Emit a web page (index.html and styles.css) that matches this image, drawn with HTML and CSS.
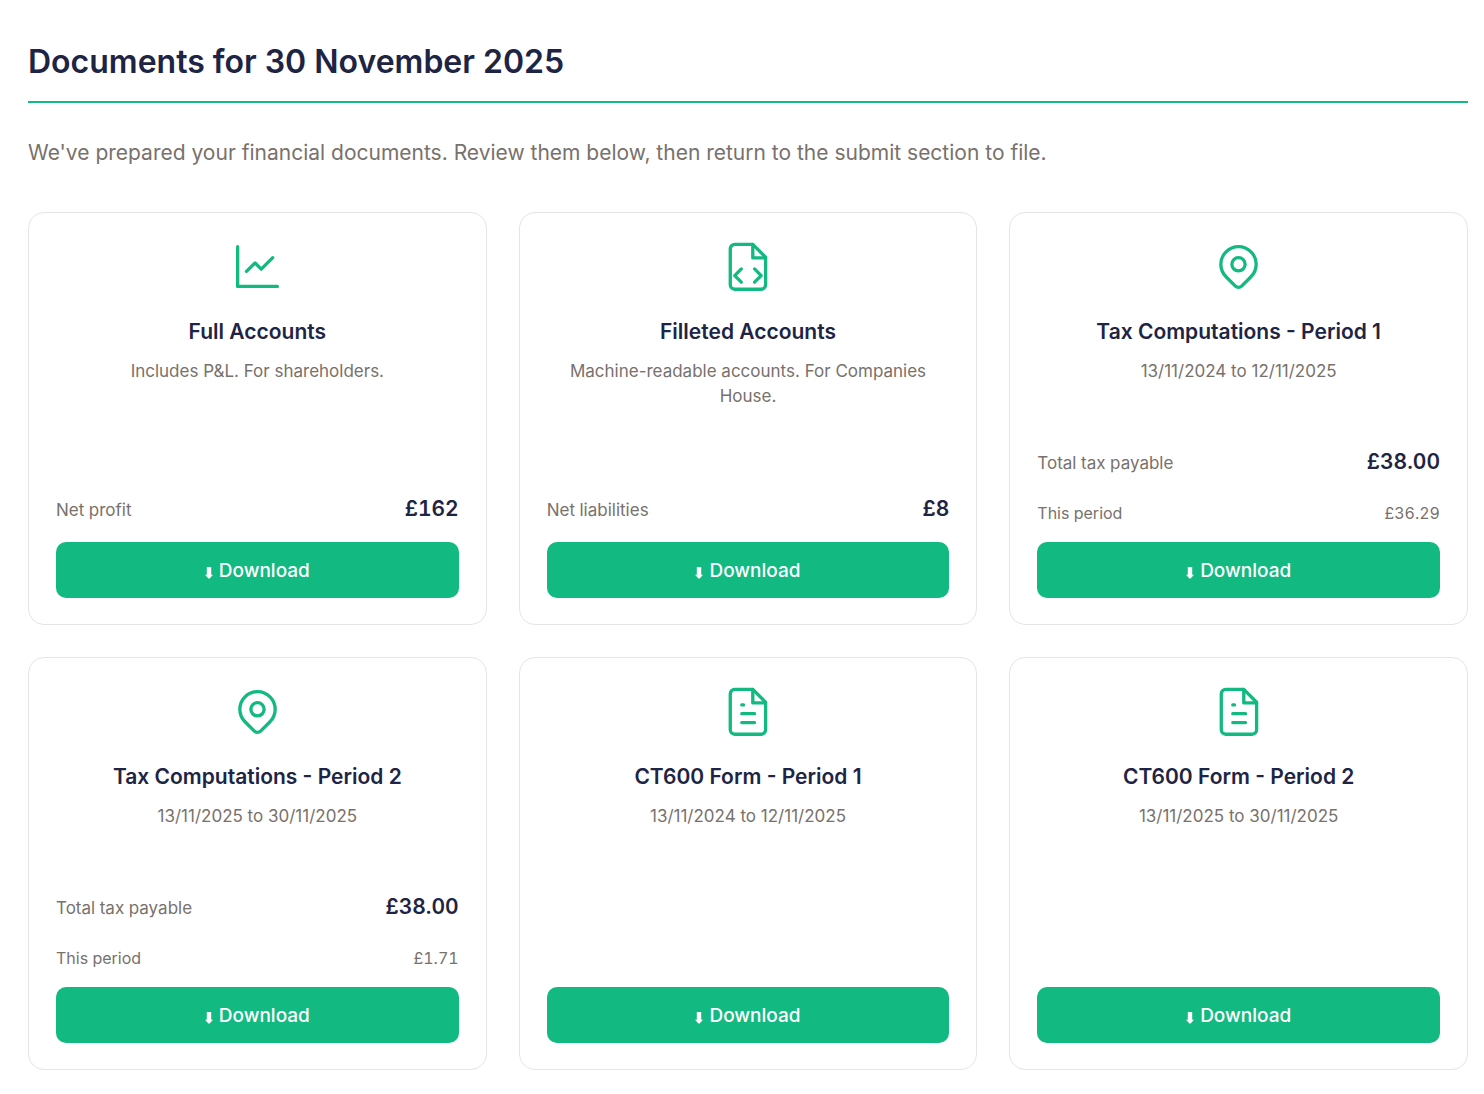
FILE: index.html
```
<!DOCTYPE html>
<html lang="en">
<head>
    <meta charset="UTF-8">
    <meta name="viewport" content="width=device-width, initial-scale=1.0">
    <title>Documents</title>
    <link rel="stylesheet" href="styles.css">
</head>
<body>
<!-- shared icons -->
<svg class="sprite" aria-hidden="true">
    <symbol id="icon-chart" viewBox="0 0 24 24">
        <path d="M3 3v18h18"/>
        <path d="M7 14.2l3.9-3.8 2.8 2.8 5.2-5.2"/>
    </symbol>
    <symbol id="icon-code" viewBox="0 0 24 24">
        <path d="M14.4 2H6.2a2 2 0 0 0-2 2v16.3a2 2 0 0 0 2 2h12a2 2 0 0 0 2-2V7.8z"/>
        <path d="M14.4 2v6.1h5.8"/>
        <path d="M9.2 13.1l-3 3 3 3M15.2 13.1l3 3-3 3"/>
    </symbol>
    <symbol id="icon-pin" viewBox="0 0 24 24">
        <path d="M17.657 16.657L13.414 20.9a1.998 1.998 0 0 1-2.827 0l-4.244-4.243a8 8 0 1 1 11.314 0z"/>
        <path d="M15 11a3 3 0 1 1-6 0 3 3 0 0 1 6 0z"/>
    </symbol>
    <symbol id="icon-file" viewBox="0 0 24 24">
        <path d="M14.4 2H6.2a2 2 0 0 0-2 2v16.3a2 2 0 0 0 2 2h12a2 2 0 0 0 2-2V7.8z"/>
        <path d="M14.4 2v6.1h5.8"/>
        <path d="M9.4 9h.8M9.4 13h5.8M9.4 17h5.8"/>
    </symbol>
    <symbol id="icon-down" viewBox="0 0 8 12">
        <path d="M1.8 0h4.4v7.8H8L4.6 11.5H3.4L0 7.8h1.8z"/>
    </symbol>
</svg>

<main class="documents">
    <h1>Documents for 30 November 2025</h1>
    <p class="intro">We've prepared your financial documents. Review them below, then return to the submit section to file.</p>

    <div class="card-grid">
        <article class="card">
            <svg class="card-icon" aria-hidden="true"><use href="#icon-chart"/></svg>
            <h2>Full Accounts</h2>
            <p class="description">Includes P&amp;L. For shareholders.</p>
            <div class="figures">
                <div class="figure"><span>Net profit</span><strong>£162</strong></div>
            </div>
            <button type="button" class="download"><svg class="arrow" aria-hidden="true"><use href="#icon-down"/></svg>Download</button>
        </article>

        <article class="card">
            <svg class="card-icon" aria-hidden="true"><use href="#icon-code"/></svg>
            <h2>Filleted Accounts</h2>
            <p class="description">Machine-readable accounts. For Companies House.</p>
            <div class="figures">
                <div class="figure"><span>Net liabilities</span><strong>£8</strong></div>
            </div>
            <button type="button" class="download"><svg class="arrow" aria-hidden="true"><use href="#icon-down"/></svg>Download</button>
        </article>

        <article class="card">
            <svg class="card-icon" aria-hidden="true"><use href="#icon-pin"/></svg>
            <h2>Tax Computations - Period 1</h2>
            <p class="description">13/11/2024 to 12/11/2025</p>
            <div class="figures">
                <div class="figure"><span>Total tax payable</span><strong>£38.00</strong></div>
                <div class="figure figure-small"><span>This period</span><span>£36.29</span></div>
            </div>
            <button type="button" class="download"><svg class="arrow" aria-hidden="true"><use href="#icon-down"/></svg>Download</button>
        </article>

        <article class="card">
            <svg class="card-icon" aria-hidden="true"><use href="#icon-pin"/></svg>
            <h2>Tax Computations - Period 2</h2>
            <p class="description">13/11/2025 to 30/11/2025</p>
            <div class="figures">
                <div class="figure"><span>Total tax payable</span><strong>£38.00</strong></div>
                <div class="figure figure-small"><span>This period</span><span>£1.71</span></div>
            </div>
            <button type="button" class="download"><svg class="arrow" aria-hidden="true"><use href="#icon-down"/></svg>Download</button>
        </article>

        <article class="card">
            <svg class="card-icon" aria-hidden="true"><use href="#icon-file"/></svg>
            <h2>CT600 Form - Period 1</h2>
            <p class="description">13/11/2024 to 12/11/2025</p>
            <button type="button" class="download"><svg class="arrow" aria-hidden="true"><use href="#icon-down"/></svg>Download</button>
        </article>

        <article class="card">
            <svg class="card-icon" aria-hidden="true"><use href="#icon-file"/></svg>
            <h2>CT600 Form - Period 2</h2>
            <p class="description">13/11/2025 to 30/11/2025</p>
            <button type="button" class="download"><svg class="arrow" aria-hidden="true"><use href="#icon-down"/></svg>Download</button>
        </article>
    </div>
</main>
</body>
</html>
```
FILE: styles.css
```
* {
    margin: 0;
    padding: 0;
    box-sizing: border-box;
}

body {
    background: #fff;
    color: #78716c;
    font-family: Inter, "Liberation Sans", sans-serif;
    font-size: 18px;
    line-height: 25px;
}

.sprite {
    display: none;
}

.documents {
    padding: 40px 16px 23px 28px;
}

h1 {
    padding-bottom: 17px;
    border-bottom: 2px solid #12b981;
    color: #1e2443;
    font-size: 32px;
    font-weight: 600;
    line-height: 44px;
}

.intro {
    margin: 32px 0 41px;
    font-size: 21px;
    line-height: 36px;
}

.card-grid {
    display: grid;
    grid-template-columns: repeat(3, 1fr);
    gap: 32px;
}

.card {
    display: flex;
    flex-direction: column;
    align-items: center;
    min-height: 413px;
    padding: 27px 27px 26px;
    border: 1px solid #e5e5e5;
    border-radius: 16px;
    text-align: center;
}

.card-icon {
    flex: none;
    width: 53px;
    height: 53px;
    margin-bottom: 22px;
    fill: none;
    stroke: #12b981;
    stroke-width: 1.5;
    stroke-linecap: round;
    stroke-linejoin: round;
}

h2 {
    margin-bottom: 10px;
    color: #1e2443;
    font-size: 21px;
    font-weight: 600;
    line-height: 34px;
}

.description {
    font-size: 17px;
}

.figures {
    width: 100%;
    margin-top: auto;
    margin-bottom: 15px;
    font-variant-numeric: tabular-nums;
}

.figure {
    display: flex;
    justify-content: space-between;
    align-items: baseline;
    font-size: 17px;
    line-height: 34px;
}

.figure strong {
    color: #1e2443;
    font-size: 21px;
    font-weight: 600;
}

.figure-small {
    margin-top: 16px;
    margin-bottom: -3px;
    font-size: 16px;
}

.download {
    display: flex;
    justify-content: center;
    align-items: center;
    gap: 6px;
    width: 100%;
    height: 56px;
    border: none;
    border-radius: 10px;
    background: #12b981;
    color: #fff;
    font-family: inherit;
    font-size: 19px;
    font-weight: 500;
    cursor: pointer;
}

.description + .download {
    margin-top: auto;
}

.arrow {
    width: 8px;
    height: 12px;
    margin-top: 5px;
    fill: currentColor;
}

@media (max-width: 900px) {
    .card-grid {
        grid-template-columns: 1fr;
    }
}
```
